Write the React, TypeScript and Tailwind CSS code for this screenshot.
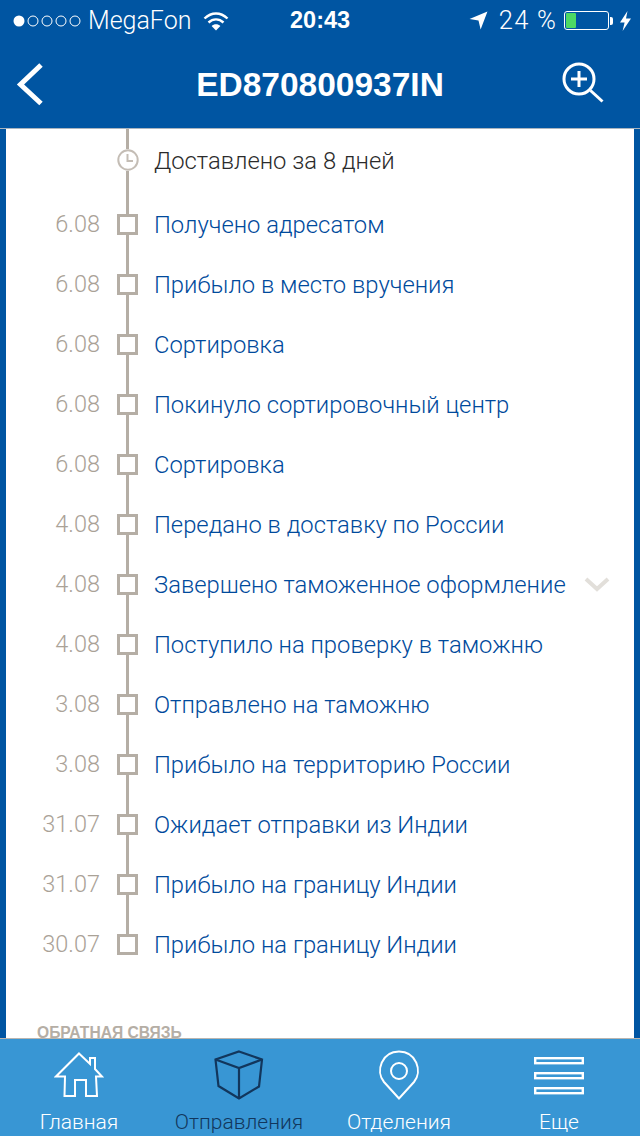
import React from "react";

const rows: [string, string][] = [
  ["6.08", "Получено адресатом"],
  ["6.08", "Прибыло в место вручения"],
  ["6.08", "Сортировка"],
  ["6.08", "Покинуло сортировочный центр"],
  ["6.08", "Сортировка"],
  ["4.08", "Передано в доставку по России"],
  ["4.08", "Завершено таможенное оформление"],
  ["4.08", "Поступило на проверку в таможню"],
  ["3.08", "Отправлено на таможню"],
  ["3.08", "Прибыло на территорию России"],
  ["31.07", "Ожидает отправки из Индии"],
  ["31.07", "Прибыло на границу Индии"],
  ["30.07", "Прибыло на границу Индии"],
];

const light = "font-['Roboto',sans-serif] font-light";

function StatusBar() {
  return (
    <div className="flex h-[41px] items-center pl-[13px] pr-[8px] text-white">
      <div className="flex w-[205px] items-center">
        <svg width="68" height="14" viewBox="0 0 68 14" className="shrink-0">
          <circle cx="6" cy="7" r="5.5" fill="#fff" />
          {[20, 34, 48, 62].map((x) => (
            <circle key={x} cx={x} cy="7" r="5" fill="none" stroke="#fff" strokeWidth="1" />
          ))}
        </svg>
        <span className={`ml-[7px] text-[25px] leading-none ${light}`}>MegaFon</span>
        <svg width="26" height="20" viewBox="0 0 26 20" className="ml-[12px] shrink-0">
          <path d="M1.5 7.5C8.5 0.8 17.5 0.8 24.5 7.5" fill="none" stroke="#fff" strokeWidth="2.4" />
          <path d="M5.5 11.5C10 7.3 16 7.3 20.5 11.5" fill="none" stroke="#fff" strokeWidth="2.4" />
          <path d="M13 19.5L8.6 15C11 12.6 15 12.6 17.4 15Z" fill="#fff" />
        </svg>
      </div>
      <div className="ml-[72px] w-[60px] whitespace-nowrap text-center text-[23.5px] font-bold leading-none">20:43</div>
      <div className="ml-auto flex items-center">
        <svg width="19" height="19" viewBox="0 0 18 18" className="shrink-0">
          <path d="M17.5 0.5L11 17.5L9 9L0.5 7.5Z" fill="#fff" />
        </svg>
        <span className={`ml-[11px] text-[25.5px] leading-none tracking-[1.2px] ${light}`}>24 %</span>
        <div className="ml-[7px] flex h-[19px] w-[45px] items-stretch rounded-[3px] border border-white p-[1px]">
          <div className="w-[10px] rounded-[1px] bg-[#4cd964]" />
        </div>
        <div className="ml-[1px] h-[8px] w-[3px] rounded-r-[2px] bg-white" />
        <svg width="13" height="20" viewBox="0 0 13 20" className="ml-[6px] shrink-0">
          <path d="M8.5 0L1 11.5H5.6L3.6 20L12 7.5H7Z" fill="#fff" />
        </svg>
      </div>
    </div>
  );
}

function NavBar() {
  return (
    <div className="flex h-[88px] items-center border-b border-[#a9b4bf] pl-[16px] pr-[36px]">
      <svg width="28" height="44" viewBox="0 0 28 44" className="shrink-0">
        <path d="M25 2L4.5 21.5L25 40.5" fill="none" stroke="#fff" strokeWidth="5" />
      </svg>
      <h1 className="flex-1 pl-[34px] text-center text-[33.5px] font-bold leading-none text-white">ED870800937IN</h1>
      <svg width="42" height="42" viewBox="0 0 42 42" className="mb-[6px] shrink-0">
        <circle cx="17" cy="18" r="15" fill="none" stroke="#fff" strokeWidth="3" />
        <path d="M9 18H25M17 10V26" stroke="#fff" strokeWidth="3" fill="none" />
        <path d="M28.5 29.5L40.5 40.5" stroke="#fff" strokeWidth="3" fill="none" />
      </svg>
    </div>
  );
}

function Timeline() {
  return (
    <div>
      <div className="flex h-[65px] items-stretch">
        <div className="w-[94px]" />
        <div className="ml-[17px] flex w-[21px] flex-col items-center">
          <div className="h-[20px] w-[2.5px] bg-[#b5aea5]" />
          <svg width="22" height="22" viewBox="0 0 22 22" className="shrink-0">
            <circle cx="11" cy="11" r="9.7" fill="#fff" stroke="#c4bdb5" strokeWidth="2" />
            <path d="M10.5 5V12H16" fill="none" stroke="#c4bdb5" strokeWidth="2" />
          </svg>
          <div className="w-[2.5px] flex-1 bg-[#b5aea5]" />
        </div>
        <div className={`ml-[16px] flex items-center text-[23.8px] text-[#2b2b2b] ${light}`}>Доставлено за 8 дней</div>
      </div>
      {rows.map(([d, t], i) => (
        <div key={i} className="flex h-[60px] items-stretch">
          <div className={`flex w-[94px] items-center justify-end pt-[1px] text-[23.5px] text-[#aaa297] ${light}`}>{d}</div>
          <div className="ml-[17px] flex w-[21px] flex-col items-center">
            <div className="w-[2.5px] flex-1 bg-[#b5aea5]" />
            <div className="h-[21px] w-[21px] shrink-0 border-[3px] border-[#b5aea5] bg-white" />
            <div className={i === rows.length - 1 ? "flex-1" : "w-[2.5px] flex-1 bg-[#b5aea5]"} />
          </div>
          <div className={`ml-[16px] flex w-[411px] items-center whitespace-nowrap pt-[4px] text-[23.8px] text-[#004a9c] ${light}`}>{t}</div>
          {i === 6 && (
            <svg width="26" height="16" viewBox="0 0 26 16" className="ml-[19px] mt-[22px] shrink-0">
              <path d="M2 3L13 13L24 3" fill="none" stroke="#e2dfda" strokeWidth="4" />
            </svg>
          )}
        </div>
      ))}
      <div className="pl-[31px] pt-[51px] text-[15.6px] font-bold leading-none text-[#b5aea5]">ОБРАТНАЯ СВЯЗЬ</div>
    </div>
  );
}

function Tab({ label, dark, children }: { label: string; dark?: boolean; children: React.ReactNode }) {
  return (
    <div className={`flex w-[160px] flex-col items-center ${dark ? "text-[#12365c]" : "text-white"}`}>
      <div className="flex h-[61px] items-end justify-center">{children}</div>
      <span className={`mt-[12px] -translate-x-[1px] text-[21px] leading-none ${light}`}>{label}</span>
    </div>
  );
}

function TabBar() {
  return (
    <div className="flex h-[98px] shrink-0 border-t border-[#b9b5b0] bg-[#3896d4]">
      <Tab label="Главная">
        <svg width="50" height="46" viewBox="0 0 50 46" fill="none" stroke="#fff" strokeWidth="2" className="mb-[2px] -translate-x-[1px]">
          <path d="M25 1.5L36 12V6H41V17L48 24.5H42L43 44H32V28H21V44H10.5L11 24.5H2Z" strokeLinejoin="miter" />
        </svg>
      </Tab>
      <Tab label="Отправления" dark>
        <svg width="50" height="50" viewBox="0 0 50 50" fill="none" stroke="#12365c" strokeWidth="2.2" className="-translate-x-[1px]">
          <path d="M25 1.5L48 9.5L45 36.5L25 48.5L4.5 36L1.5 9.5Z" />
          <path d="M1.5 9.5L25 18L48 9.5M25 18V48.5" />
        </svg>
      </Tab>
      <Tab label="Отделения">
        <svg width="44" height="50" viewBox="0 0 44 50" fill="none" stroke="#fff" strokeWidth="2" className="-translate-x-[1px]">
          <path d="M22 48.5L7 32C-2 21 5 1.5 22 1.5C39 1.5 46 21 37 32Z" />
          <circle cx="22" cy="21" r="8" />
        </svg>
      </Tab>
      <Tab label="Еще">
        <svg width="50" height="38" viewBox="0 0 50 38" fill="none" stroke="#fff" strokeWidth="2.4" className="mb-[5px] -translate-x-[1px]">
          <rect x="1.2" y="1.2" width="47.6" height="5" />
          <rect x="1.2" y="16.2" width="47.6" height="5" />
          <rect x="1.2" y="31.2" width="47.6" height="5" />
        </svg>
      </Tab>
    </div>
  );
}

export default function App() {
  return (
    <div className="flex h-[1136px] w-[640px] flex-col overflow-hidden bg-[#0055a2] font-['Liberation_Sans',Arial,sans-serif]">
      <StatusBar />
      <NavBar />
      <main className="mx-[6px] min-h-0 flex-1 overflow-hidden bg-white">
        <Timeline />
      </main>
      <TabBar />
    </div>
  );
}
